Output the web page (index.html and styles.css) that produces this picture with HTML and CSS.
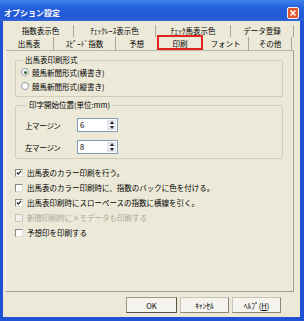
FILE: index.html
```html
<!DOCTYPE html>
<html lang="ja">
<head>
    <meta charset="UTF-8">
    <title>オプション設定</title>
    <link rel="stylesheet" href="styles.css">
</head>
<body>
<div class="window">
    <div class="titlebar">
        <span class="title">オプション設定</span>
        <span class="close">
            <svg width="8" height="8" viewBox="0 0 8 8"><path d="M1.5 1.5L6.5 6.5M6.5 1.5L1.5 6.5" stroke="#fff" stroke-width="1.6"/></svg>
        </span>
    </div>
    <div class="client">
        <div class="tabs">
            <div class="tab-row back">
                <div class="tab w-shisu">指数表示色</div>
                <div class="tab w-race">ﾁｪｯｸﾚｰｽ表示色</div>
                <div class="tab w-uma">ﾁｪｯｸ馬表示色</div>
                <div class="tab w-data last">データ登録</div>
            </div>
            <div class="tab-row front">
                <div class="tab w-deba first">出馬表</div>
                <div class="tab w-speed">ｽﾋﾟｰﾄﾞ指数</div>
                <div class="tab w-yoso">予想</div>
                <div class="tab w-insatsu selected">印刷</div>
                <div class="tab w-font">フォント</div>
                <div class="tab w-other last">その他</div>
            </div>
        </div>

        <div class="panel">
            <fieldset class="group group-format">
                <legend>出馬表印刷形式</legend>
                <label class="radio-row"><span class="radio on"></span>競馬新聞形式(横書き)</label>
                <label class="radio-row"><span class="radio"></span>競馬新聞形式(縦書き)</label>
            </fieldset>

            <fieldset class="group group-margin">
                <legend>印字開始位置(単位:mm)</legend>
                <div class="margin-row">
                    <span class="margin-label">上マージン</span>
                    <span class="spinbox"><span class="spin-value">6</span><span class="spin"><span class="up"></span><span class="down"></span></span></span>
                </div>
                <div class="margin-row">
                    <span class="margin-label">左マージン</span>
                    <span class="spinbox"><span class="spin-value">8</span><span class="spin"><span class="up"></span><span class="down"></span></span></span>
                </div>
            </fieldset>

            <div class="checks">
                <label class="check-row"><span class="check on"><svg width="7" height="7" viewBox="0 0 7 7"><path d="M1 3.5L2.8 5.3L6 1.5" fill="none" stroke="#222" stroke-width="1.4"/></svg></span>出馬表のカラー印刷を行う。</label>
                <label class="check-row"><span class="check"></span>出馬表のカラー印刷時に、指数のバックに色を付ける。</label>
                <label class="check-row"><span class="check on"><svg width="7" height="7" viewBox="0 0 7 7"><path d="M1 3.5L2.8 5.3L6 1.5" fill="none" stroke="#222" stroke-width="1.4"/></svg></span>出馬表印刷時にスローペースの指数に横線を引く。</label>
                <label class="check-row disabled"><span class="check"></span>新聞印刷時にメモデータも印刷する</label>
                <label class="check-row"><span class="check"></span>予想印を印刷する</label>
            </div>
        </div>

        <div class="buttons">
            <button class="btn default">OK</button>
            <button class="btn">ｷｬﾝｾﾙ</button>
            <button class="btn">ﾍﾙﾌﾟ(<u>H</u>)</button>
        </div>
    </div>
</div>
</body>
</html>
```

FILE: styles.css
```css
body {
    margin: 0;
    font-family: "Noto Sans CJK JP", "DejaVu Sans", sans-serif;
    font-size: 7.5px;
    color: #000;
}
.window {
    width: 304px;
    height: 321px;
    background: #2152d6;
    display: flex;
    flex-direction: column;
}
.titlebar {
    height: 21px;
    display: flex;
    align-items: center;
    justify-content: space-between;
    padding: 5px 5px 0 4px;
    box-sizing: border-box;
    background: linear-gradient(#3f82ec, #2560dc 35%, #2258d4 85%, #3567dc);
}
.title {
    color: #fff;
    font-weight: bold;
    font-size: 8px;
    line-height: 12px;
}
.close {
    width: 10px;
    height: 10px;
    border: 1px solid #f4f4f4;
    border-radius: 2px;
    background: #e0582e;
    display: flex;
    align-items: center;
    justify-content: center;
}
.client {
    flex: 1;
    margin: 0 4px 4px 3px;
    background: #ece9d8;
    display: flex;
    flex-direction: column;
}

/* tabs */
.tabs {
    height: 29px;
    padding-top: 4px;
    box-sizing: border-box;
}
.tab-row {
    display: flex;
}
.tab-row.back {
    height: 12px;
    padding-left: 5px;
}
.tab-row.front {
    height: 13px;
    padding-left: 2px;
}
.tab {
    box-sizing: border-box;
    text-align: center;
    line-height: 11px;
    border-left: 1px solid #a9a798;
    white-space: nowrap;
}
.tab-row.back .tab:first-child {
    border-left: none;
}
.tab.last {
    border-right: 1px solid #a9a798;
}
.tab.first {
    border-left: none;
}
.tab-row.front .tab {
    line-height: 13px;
}
.tab.selected {
    border: 2px solid #e2231c;
    line-height: 10px;
    margin-top: -2px;
    height: 15px;
    position: relative;
}
.tab.selected + .tab {
    border-left: none;
}
.w-shisu { width: 65px; }
.w-race { width: 82px; }
.w-uma { width: 75px; }
.w-data { width: 64px; }
.w-deba { width: 48px; }
.w-speed { width: 62px; }
.w-yoso { width: 42px; }
.w-insatsu { width: 46px; }
.w-font { width: 45px; }
.w-other { width: 44px; }

/* panel */
.panel {
    margin-left: 2px;
    width: 289px;
    height: 242px;
    box-sizing: border-box;
    border: 1px solid #a09f94;
    border-left-color: #f8f8f4;
    border-top-color: #b8b6a8;
    padding: 4px 10px 0 9px;
}
.group {
    margin: 0;
    border: 1px solid #cfccbb;
    border-radius: 2px;
    padding: 0 4px 3px 5px;
}
.group legend {
    padding: 0 2px;
    margin-left: 2px;
    line-height: 10px;
}
.group-margin {
    margin-top: 3px;
    padding: 8px 4px 4px 9px;
}
.radio-row {
    display: flex;
    align-items: center;
    height: 14px;
    gap: 3px;
}
.radio {
    width: 6px;
    height: 6px;
    border-radius: 50%;
    border: 1px solid #8d9da8;
    background: #fff;
    position: relative;
}
.radio.on::after {
    content: "";
    position: absolute;
    left: 1.5px;
    top: 1.5px;
    width: 3px;
    height: 3px;
    border-radius: 50%;
    background: #2a6a22;
}
.margin-row {
    display: flex;
    align-items: center;
    height: 14px;
}
.margin-row + .margin-row {
    margin-top: 8px;
}
.margin-label {
    width: 52px;
    font-feature-settings: "palt";
}
.spinbox {
    width: 41px;
    height: 14px;
    box-sizing: border-box;
    border: 1px solid #7f9db9;
    background: #fff;
    display: flex;
}
.spin-value {
    flex: 1;
    padding-left: 2px;
    line-height: 12px;
}
.spin {
    width: 9px;
    margin: 1px;
    display: flex;
    flex-direction: column;
    gap: 1px;
}
.spin span {
    flex: 1;
    background: #e4e6ee;
    display: flex;
    align-items: center;
    justify-content: center;
}
.spin .up::before {
    content: "";
    border: 2px solid transparent;
    border-bottom: 3px solid #222;
    border-top: none;
}
.spin .down::before {
    content: "";
    border: 2px solid transparent;
    border-top: 3px solid #222;
    border-bottom: none;
}

/* checkboxes */
.checks {
    margin-top: 6px;
}
.check-row {
    display: flex;
    align-items: center;
    height: 15px;
    gap: 4px;
}
.check {
    width: 8px;
    height: 8px;
    box-sizing: border-box;
    border: 1px solid #8a8a84;
    border-right-color: #dcdcd4;
    border-bottom-color: #dcdcd4;
    background: #fff;
    display: flex;
    align-items: center;
    justify-content: center;
}
.check-row.disabled {
    color: #aca899;
}
.check-row.disabled .check {
    border-color: #cac8bb;
    background: #f3f2ea;
}

/* buttons */
.buttons {
    display: flex;
    justify-content: flex-end;
    gap: 3px;
    margin-top: 5px;
    padding-right: 19px;
}
.btn {
    width: 49px;
    height: 16px;
    padding: 0;
    font-family: inherit;
    font-size: 7.5px;
    background: #f4f3ee;
    border: 1px solid #c8c5b8;
    border-right-color: #8a8778;
    border-bottom-color: #8a8778;
}
.btn.default {
    width: 51px;
    border: 1px solid #55534a;
    border-top-color: #9a9788;
    border-left-color: #9a9788;
}
.btn u {
    text-decoration: underline;
}
```
